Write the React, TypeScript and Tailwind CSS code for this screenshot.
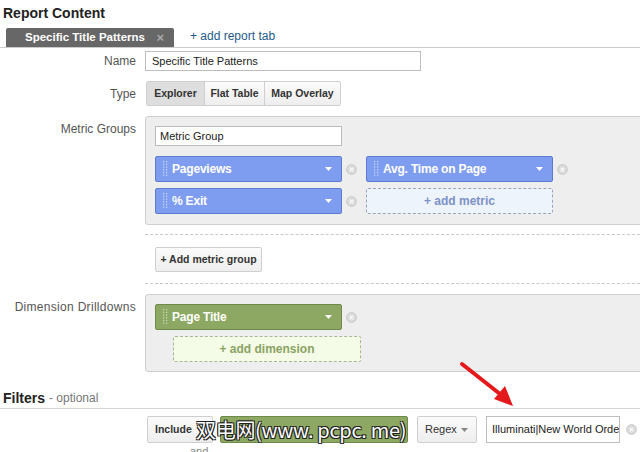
import React from 'react';

const font = "font-['Liberation_Sans',Arial,sans-serif]";

const RemoveIcon = () => (
  <svg width="11" height="11" viewBox="0 0 11 11" className="shrink-0">
    <circle cx="5.5" cy="5.5" r="4.8" fill="#dcdcdc" stroke="#c4c4c4" strokeWidth="1" />
    <path d="M3.8 3.8 L7.2 7.2 M7.2 3.8 L3.8 7.2" stroke="#f7f7f7" strokeWidth="1.3" />
  </svg>
);

const DragHandle = () => (
  <svg width="5" height="16" viewBox="0 0 5 16" className="shrink-0">
    {[0, 1, 2, 3, 4, 5].map((i) => (
      <g key={i} fill="rgba(255,255,255,0.55)">
        <rect x="0" y={i * 2.7} width="1.3" height="1.3" />
        <rect x="3" y={i * 2.7} width="1.3" height="1.3" />
      </g>
    ))}
  </svg>
);

const Caret = ({ color = '#fff' }: { color?: string }) => (
  <svg width="7" height="4" viewBox="0 0 7 4" className="shrink-0">
    <path d="M0 0 L7 0 L3.5 4 Z" fill={color} />
  </svg>
);

interface PillProps {
  label: string;
  tone: 'blue' | 'green';
}

const Pill = ({ label, tone }: PillProps) => (
  <div
    className={
      tone === 'blue'
        ? 'flex h-[26px] w-[187px] items-center rounded-[2px] border border-[#5d7bd0] bg-[#7f9df0] pl-[7px] pr-[9px]'
        : 'flex h-[26px] w-[187px] items-center rounded-[2px] border border-[#6e8a4a] bg-[#8ca862] pl-[7px] pr-[9px]'
    }
  >
    <DragHandle />
    <span className="ml-[4px] flex-1 text-[12px] font-bold tracking-[-0.2px] text-white">{label}</span>
    <Caret />
  </div>
);

const Label = ({ children, className = '' }: { children: React.ReactNode; className?: string }) => (
  <div className={`w-[136px] shrink-0 text-right text-[12px] text-[#555] ${className}`}>{children}</div>
);

export default function App() {
  return (
    <div className={`relative h-[452px] w-[640px] overflow-hidden bg-white ${font}`}>
      {/* header */}
      <div className="h-[28px] pl-[3px] pt-[5px] text-[14px] font-bold leading-[16px] text-[#222]">Report Content</div>
      <div className="flex h-[20px] items-end border-b border-[#ccc] pl-[6px]">
        <div className="flex h-[19px] w-[168px] items-center rounded-t-[2px] bg-[#676767] pl-[19px] pr-[10px]">
          <span className="flex-1 text-[11.5px] font-bold text-white">Specific Title Patterns</span>
          <span className="text-[13px] font-bold leading-none text-[#aaa]">×</span>
        </div>
        <span className="mb-[2px] ml-[16px] text-[12px] text-[#1f5b8c]">+ add report tab</span>
      </div>

      {/* name */}
      <div className="mt-[3px] flex items-center">
        <Label>Name</Label>
        <div className="ml-[9px] flex h-[20px] w-[276px] items-center border border-[#bdbdbd] pl-[6px] text-[11px] text-[#222]">
          Specific Title Patterns
        </div>
      </div>

      {/* type */}
      <div className="mt-[10px] flex items-center">
        <Label>Type</Label>
        <div className="ml-[10px] flex h-[25px] overflow-hidden rounded-[2px] border border-[#cfcfcf] text-[10.5px] font-bold text-[#333]">
          <div className="flex w-[57px] items-center justify-center bg-[#dedede]">Explorer</div>
          <div className="flex w-[60px] items-center justify-center border-l border-[#cfcfcf] bg-gradient-to-b from-[#fbfbfb] to-[#eeeeee]">
            Flat Table
          </div>
          <div className="flex w-[76px] items-center justify-center border-l border-[#cfcfcf] bg-gradient-to-b from-[#fbfbfb] to-[#eeeeee]">
            Map Overlay
          </div>
        </div>
      </div>

      {/* metric groups */}
      <div className="mt-[10px] flex">
        <Label className="pt-[4px]">Metric Groups</Label>
        <div className="ml-[9px] w-[520px] shrink-0 rounded-[3px] border border-[#cfcfcf] bg-[#eeeeee] px-[9px] pb-[10px] pt-[9px]">
          <div className="flex h-[20px] w-[187px] items-center border border-[#bdbdbd] bg-white pl-[4px] text-[11px] text-[#222]">
            Metric Group
          </div>
          <div className="mt-[10px] flex flex-col gap-[6px]">
            <div className="flex items-center">
              <Pill label="Pageviews" tone="blue" />
              <div className="ml-[4px]">
                <RemoveIcon />
              </div>
              <div className="ml-[9px]">
                <Pill label="Avg. Time on Page" tone="blue" />
              </div>
              <div className="ml-[4px]">
                <RemoveIcon />
              </div>
            </div>
            <div className="flex items-center">
              <Pill label="% Exit" tone="blue" />
              <div className="ml-[4px]">
                <RemoveIcon />
              </div>
              <div className="ml-[9px] flex h-[26px] w-[187px] items-center justify-center rounded-[2px] border border-dashed border-[#9aa4b8] bg-[#eef4fc] text-[12px] font-bold text-[#7d92c6]">
                + add metric
              </div>
            </div>
          </div>
        </div>
      </div>

      {/* add metric group */}
      <div className="mt-[9px] flex">
        <Label> </Label>
        <div className="ml-[9px] h-[50px] w-[520px] shrink-0 border-y border-dashed border-[#c8c8c8] pl-[10px] pt-[12px]">
          <div className="flex h-[25px] w-[107px] items-center justify-center rounded-[2px] border border-[#cfcfcf] bg-gradient-to-b from-[#fbfbfb] to-[#eeeeee] text-[10.5px] font-bold text-[#333]">
            + Add metric group
          </div>
        </div>
      </div>

      {/* dimension drilldowns */}
      <div className="mt-[10px] flex">
        <Label className="pt-[4px] tracking-[0.3px]">Dimension Drilldowns</Label>
        <div className="ml-[9px] w-[520px] shrink-0 rounded-[3px] border border-[#cfcfcf] bg-[#eeeeee] px-[9px] pb-[9px] pt-[9px]">
          <div className="flex items-center">
            <Pill label="Page Title" tone="green" />
            <div className="ml-[4px]">
              <RemoveIcon />
            </div>
          </div>
          <div className="ml-[18px] mt-[6px] flex h-[26px] w-[188px] items-center justify-center rounded-[2px] border border-dashed border-[#a9b596] bg-[#f4fbe6] text-[12px] font-bold text-[#8aa464]">
            + add dimension
          </div>
        </div>
      </div>

      {/* filters */}
      <div className="flex h-[37px] items-end border-b border-[#d6d6d6] pb-[2px] pl-[3px] leading-[16px]">
        <span className="text-[14px] font-bold text-[#222]">Filters</span>
        <span className="ml-[4px] text-[12px] text-[#777]">- optional</span>
      </div>
      <div className="ml-[147px] mt-[7px] flex items-center">
        <div className="flex h-[27px] w-[66px] items-center rounded-[2px] border border-[#cfcfcf] bg-gradient-to-b from-[#fbfbfb] to-[#eeeeee] pl-[7px] text-[10.5px] font-bold text-[#333]">
          Include
        </div>
        <div className="ml-[7px] h-[27px] w-[188px] rounded-[2px] border border-[#6e8a4a] bg-[#8ca862]" />
        <div className="ml-[9px] flex h-[27px] w-[60px] items-center rounded-[2px] border border-[#cfcfcf] bg-gradient-to-b from-[#fbfbfb] to-[#eeeeee] pl-[7px] pr-[8px] text-[11px] text-[#333]">
          <span className="flex-1">Regex</span>
          <Caret color="#888" />
        </div>
        <div className="ml-[9px] flex h-[27px] w-[134px] items-center overflow-hidden whitespace-nowrap border border-[#bdbdbd] pl-[5px] text-[11px] text-[#222]">
          Illuminati|New World Order
        </div>
        <div className="ml-[6px]">
          <RemoveIcon />
        </div>
      </div>
      <div className="ml-[190px] mt-[2px] text-[11px] leading-[12px] text-[#888]">and</div>

      {/* watermark */}
      <div className="absolute left-[196px] top-[417px] whitespace-nowrap font-['Noto_Sans_CJK_SC',sans-serif] text-[20px] leading-[26px] tracking-[-0.3px] text-white [text-shadow:1px_1px_0_#222,-1px_-1px_0_#222,1px_-1px_0_#222,-1px_1px_0_#222]">
        双电网(www. pcpc. me)
      </div>

      {/* red arrow */}
      <svg className="absolute left-0 top-0" width="640" height="452" viewBox="0 0 640 452">
        <line x1="462" y1="364" x2="500" y2="394" stroke="#e3191b" strokeWidth="4" strokeLinecap="round" />
        <polygon points="513,406 494,399 505,386" fill="#e3191b" />
      </svg>
    </div>
  );
}
